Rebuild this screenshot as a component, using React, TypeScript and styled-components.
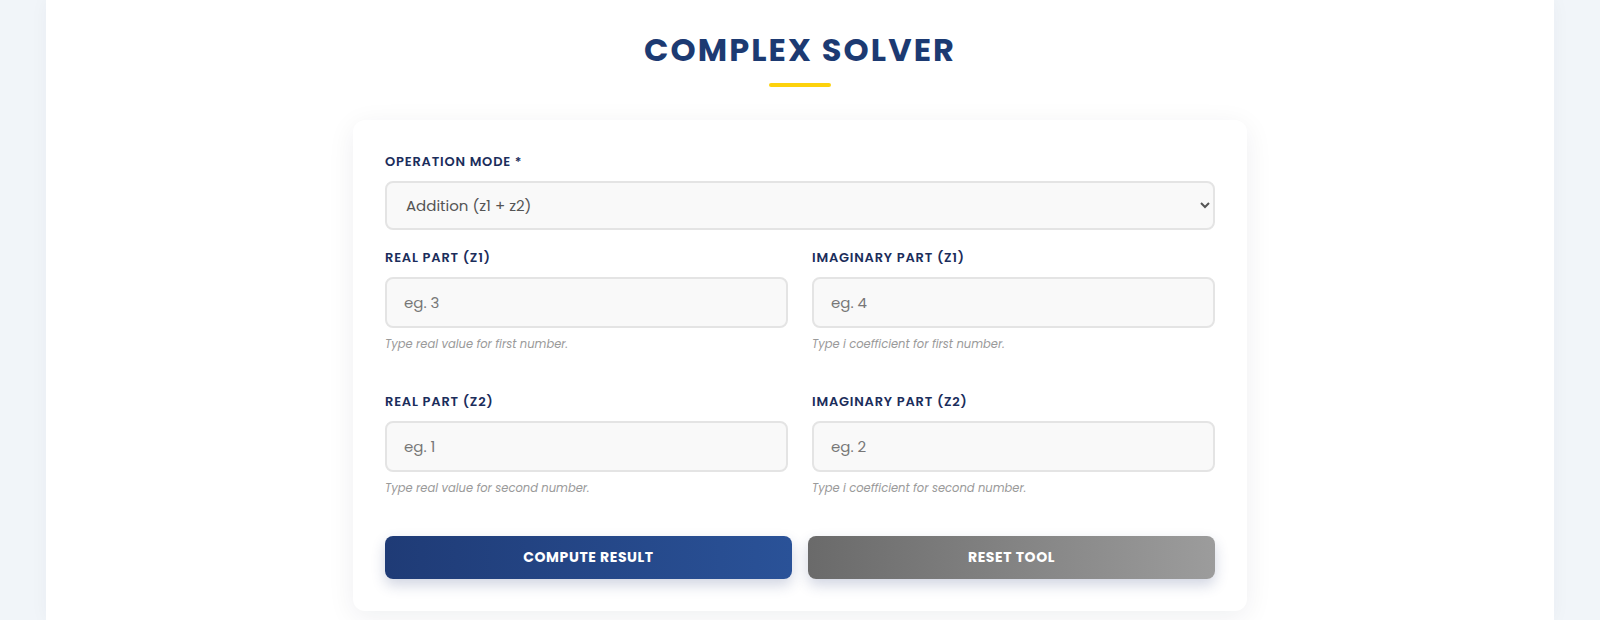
import styled, { createGlobalStyle } from 'styled-components';

const GlobalStyle = createGlobalStyle`
  body {
    margin: 0;
    background: #f1f5f9;
    font-family: "Poppins", "Inter", "Noto Sans", sans-serif;
  }
  * {
    box-sizing: border-box;
  }
`;

const Page = styled.div`
  padding: 0 46px;
`;

const Panel = styled.main`
  background: #ffffff;
  min-height: 620px;
  padding-top: 30px;
  box-shadow: 0 0 18px rgba(15, 40, 80, 0.04);
`;

const Heading = styled.h1`
  margin: 0;
  text-align: center;
  font-size: 32px;
  font-weight: 700;
  line-height: 40px;
  letter-spacing: 2.1px;
  color: #1c3a72;
`;

const Underline = styled.div`
  width: 62px;
  height: 4px;
  border-radius: 2px;
  background: #fdd20c;
  margin: 13px auto 0;
`;

const Card = styled.form`
  width: 894px;
  margin: 33px auto 0;
  padding: 32px;
  background: #ffffff;
  border-radius: 12px;
  box-shadow: 0 6px 28px rgba(20, 30, 60, 0.07);
`;

const Field = styled.div<{ $gap?: number }>`
  display: flex;
  flex-direction: column;
  margin-bottom: ${({ $gap }) => $gap ?? 0}px;
`;

const Label = styled.label`
  font-size: 13px;
  line-height: 20px;
  font-weight: 600;
  letter-spacing: 0.8px;
  text-transform: uppercase;
  color: #1b2d5b;
  margin-bottom: 9px;
`;

const Select = styled.select`
  height: 49px;
  padding: 0 14px 0 15px;
  border: 2px solid #e4e4e4;
  border-radius: 8px;
  background: #f9f9f9;
  font-family: inherit;
  font-size: 15px;
  color: #555;
`;

const Input = styled.input`
  height: 51px;
  padding: 0 17px;
  border: 2px solid #e4e4e4;
  border-radius: 8px;
  background: #f9f9f9;
  font-family: inherit;
  font-size: 15px;
  color: #333;
  &::placeholder {
    color: #777;
  }
`;

const Hint = styled.small`
  margin-top: 8px;
  font-size: 11.5px;
  line-height: 16px;
  font-style: italic;
  color: #9a9a9a;
`;

const Row = styled.div`
  display: grid;
  grid-template-columns: 1fr 1fr;
  gap: 24px;
  margin-bottom: 40px;
`;

const ButtonRow = styled.div`
  display: grid;
  grid-template-columns: 1fr 1fr;
  gap: 16px;
`;

const Button = styled.button<{ $variant: 'primary' | 'secondary' }>`
  height: 43px;
  border: none;
  border-radius: 8px;
  font-family: inherit;
  font-size: 14px;
  font-weight: 700;
  letter-spacing: 0.6px;
  color: #ffffff;
  cursor: pointer;
  background: ${({ $variant }) =>
    $variant === 'primary'
      ? 'linear-gradient(90deg, #1f3b76, #2a5298)'
      : 'linear-gradient(90deg, #6a6a6a, #9c9c9c)'};
  box-shadow: 0 6px 14px rgba(40, 60, 120, 0.22);
`;

const fields = [
  [
    { label: 'Real Part (z1)', placeholder: 'eg. 3', hint: 'Type real value for first number.' },
    { label: 'Imaginary Part (z1)', placeholder: 'eg. 4', hint: 'Type i coefficient for first number.' },
  ],
  [
    { label: 'Real Part (z2)', placeholder: 'eg. 1', hint: 'Type real value for second number.' },
    { label: 'Imaginary Part (z2)', placeholder: 'eg. 2', hint: 'Type i coefficient for second number.' },
  ],
];

export default function App() {
  return (
    <>
      <GlobalStyle />
      <Page>
        <Panel>
          <Heading>COMPLEX SOLVER</Heading>
          <Underline />
          <Card onSubmit={(e) => e.preventDefault()}>
            <Field $gap={18}>
              <Label>Operation Mode *</Label>
              <Select defaultValue="add">
                <option value="add">Addition (z1 + z2)</option>
                <option value="sub">Subtraction (z1 - z2)</option>
                <option value="mul">Multiplication (z1 × z2)</option>
                <option value="div">Division (z1 ÷ z2)</option>
              </Select>
            </Field>
            {fields.map((row, i) => (
              <Row key={i}>
                {row.map((f) => (
                  <Field key={f.label}>
                    <Label>{f.label}</Label>
                    <Input type="number" placeholder={f.placeholder} />
                    <Hint>{f.hint}</Hint>
                  </Field>
                ))}
              </Row>
            ))}
            <ButtonRow>
              <Button type="submit" $variant="primary">COMPUTE RESULT</Button>
              <Button type="reset" $variant="secondary">RESET TOOL</Button>
            </ButtonRow>
          </Card>
        </Panel>
      </Page>
    </>
  );
}
